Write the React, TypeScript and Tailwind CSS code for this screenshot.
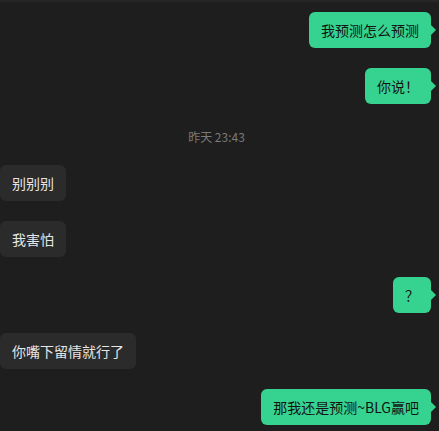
import React from "react";

interface Message {
    text: string,
    mine: boolean
}

const before: Message[] = [
    { text: "我预测怎么预测", mine: true },
    { text: "你说！", mine: true },
]

const after: Message[] = [
    { text: "别别别", mine: false },
    { text: "我害怕", mine: false },
    { text: "？", mine: true },
    { text: "你嘴下留情就行了", mine: false },
    { text: "那我还是预测~BLG赢吧", mine: true },
]

function Bubble({ msg }: { msg: Message }) {
    if (msg.mine) {
        return (
            <div className="flex justify-end pr-2">
                <div className="relative h-[36px] px-3 flex items-center rounded-md bg-[#35d38f] text-[#141414] text-sm leading-none">
                    {msg.text}
                    <span className="absolute right-[-5px] top-1/2 -translate-y-1/2 w-0 h-0 border-y-[5px] border-y-transparent border-l-[5px] border-l-[#35d38f]" />
                </div>
            </div>
        )
    }
    return (
        <div className="flex justify-start">
            <div className="h-[36px] px-3 flex items-center rounded-md bg-[#2b2b2b] text-[#e6e6e6] text-sm leading-none">
                {msg.text}
            </div>
        </div>
    )
}

export default function App() {
    return (
        <div
            className="w-[439px] h-[431px] overflow-hidden bg-[#1e1e1e] border-t-2 border-[#262626] pt-[10px] flex flex-col"
            style={{ fontFamily: '"Noto Sans CJK SC", "Noto Sans", sans-serif' }}
        >
            <div className="flex flex-col gap-5">
                {before.map((m, i) => <Bubble key={i} msg={m} />)}
            </div>
            <div className="h-[61px] pt-[25px] pr-[6px] text-center text-xs leading-[16px] text-[#7a7a7a]">
                昨天 23:43
            </div>
            <div className="flex flex-col gap-5">
                {after.map((m, i) => <Bubble key={i} msg={m} />)}
            </div>
        </div>
    )
}
